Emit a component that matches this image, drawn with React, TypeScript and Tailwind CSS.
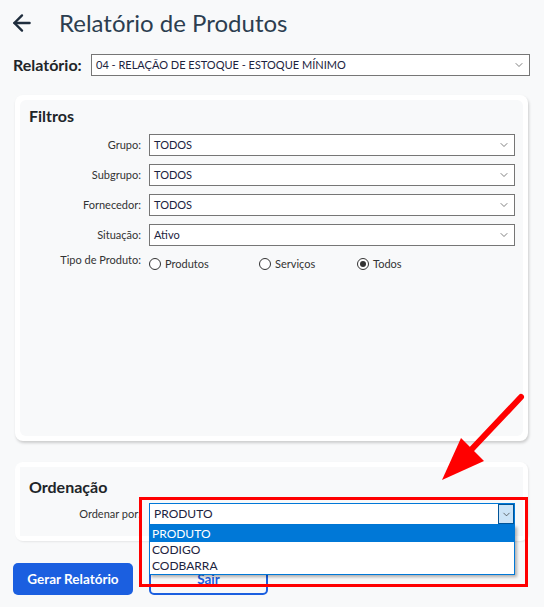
import { ArrowLeft, ChevronDown } from "lucide-react";

const filtros = [
  { label: "Grupo:", value: "TODOS" },
  { label: "Subgrupo:", value: "TODOS" },
  { label: "Fornecedor:", value: "TODOS" },
  { label: "Situação:", value: "Ativo" },
];

const tipos = [
  { label: "Produtos", checked: false, w: "w-[110px]" },
  { label: "Serviços", checked: false, w: "w-[98px]" },
  { label: "Todos", checked: true, w: "w-[60px]" },
];

function FakeSelect({ value, className = "" }: { value: string; className?: string }) {
  return (
    <div
      className={`flex items-center justify-between h-[22px] bg-white border border-[#767676] pl-[4px] pr-[4px] text-[11px] text-[#1c2340] ${className}`}
    >
      <span>{value}</span>
      <ChevronDown size={12} strokeWidth={1.5} className="text-[#555]" />
    </div>
  );
}

function Radio({ checked }: { checked: boolean }) {
  return (
    <span className="w-[12px] h-[12px] rounded-full border border-[#333] bg-white flex items-center justify-center">
      {checked && <span className="w-[6px] h-[6px] rounded-full bg-[#333]" />}
    </span>
  );
}

export default function App() {
  return (
    <div
      className="relative w-[544px] h-[607px] bg-[#f8f9fa] overflow-hidden"
      style={{ fontFamily: "Lato, 'Noto Sans', sans-serif" }}
    >
      {/* Header */}
      <div className="flex items-center h-[45px] pl-[9px]">
        <ArrowLeft size={26} strokeWidth={2.2} className="text-[#1f2d3d]" />
        <h1 className="ml-[24px] text-[24px] text-[#2c3e50] leading-none">Relatório de Produtos</h1>
      </div>

      {/* Relatório select */}
      <div className="flex items-center h-[22px] mt-[9px] pl-[13px]">
        <span className="w-[78px] text-[16px] font-bold text-[#212529]">Relatório:</span>
        <FakeSelect value="04 - RELAÇÃO DE ESTOQUE - ESTOQUE MÍNIMO" className="w-[439px] text-[10.6px]" />
      </div>

      {/* Filtros */}
      <div className="ml-[15px] mt-[19px] w-[513px] h-[346px] bg-white rounded-lg p-[5px] shadow-[1px_2px_3px_rgba(0,0,0,0.18)]">
        <div className="h-full bg-[#f8f9fa] rounded-md pl-[9px] pt-[6px]">
          <h2 className="text-[16px] font-bold text-[#212529] leading-[20px]">Filtros</h2>
          <div className="flex flex-col gap-[8px] mt-[8px]">
            {filtros.map((f) => (
              <div key={f.label} className="flex items-center">
                <span className="w-[120px] pr-[8px] text-right text-[11px] text-[#333]">{f.label}</span>
                <FakeSelect value={f.value} className="w-[366px]" />
              </div>
            ))}
            <div className="flex items-start -mt-[2px]">
              <span className="w-[120px] pr-[8px] text-right text-[11px] text-[#333]">Tipo de Produto:</span>
              <div className="flex items-center pt-[4px]">
                {tipos.map((t) => (
                  <label key={t.label} className={`flex items-center gap-[4px] text-[11px] text-[#333] ${t.w}`}>
                    <Radio checked={t.checked} />
                    <span>{t.label}</span>
                  </label>
                ))}
              </div>
            </div>
          </div>
        </div>
      </div>

      {/* Ordenação */}
      <div className="ml-[15px] mt-[21px] w-[513px] h-[79px] bg-white rounded-lg p-[5px] shadow-[1px_1px_2px_rgba(0,0,0,0.08)]">
        <div className="h-full bg-[#f8f9fa] pl-[9px] pt-[10px]">
          <h2 className="text-[16px] font-bold text-[#212529] leading-[20px]">Ordenação</h2>
          <div className="flex items-center mt-[6px]">
            <span className="w-[120px] pr-[8px] text-right text-[11px] text-[#333]">Ordenar por:</span>
            <div className="relative w-[366px] z-10">
              <div className="flex items-center justify-between h-[22px] bg-white border border-[#0078d7] pl-[4px] text-[12px] text-[#1c2340]">
                <span>PRODUTO</span>
                <span className="h-[20px] w-[16px] bg-[#cce4f7] border border-[#005499] flex items-center justify-center">
                  <ChevronDown size={11} strokeWidth={1.5} className="text-[#333]" />
                </span>
              </div>
              <ul className="absolute left-0 top-full w-full bg-white border border-[#0078d7] shadow-[2px_2px_3px_rgba(0,0,0,0.3)] text-[12px] leading-[16px] text-[#1c2340]">
                <li className="bg-[#0078d7] text-white pl-[2px]">PRODUTO</li>
                <li className="pl-[2px]">CODIGO</li>
                <li className="pl-[2px]">CODBARRA</li>
              </ul>
            </div>
          </div>
        </div>
      </div>

      {/* Buttons */}
      <div className="flex mt-[22px] pl-[13px] gap-[16px]">
        <button className="w-[120px] h-[32px] rounded-[5px] bg-[#1b5fe0] text-white text-[13.5px] font-bold">
          Gerar Relatório
        </button>
        <button className="w-[119px] h-[32px] rounded-[5px] border-2 border-[#1b5fe0] text-[#1b5fe0] text-[13.5px] font-bold">
          Sair
        </button>
      </div>

      {/* Annotation: red frame */}
      <div className="absolute left-[139px] top-[497px] w-[389px] h-[90px] border-[3px] border-[#ff0000] z-20 pointer-events-none" />

      {/* Annotation: red arrow */}
      <svg className="absolute left-0 top-0 z-20 pointer-events-none" width="544" height="607" viewBox="0 0 544 607">
        <line x1="521" y1="397" x2="470" y2="451" stroke="#ff0000" strokeWidth="6" strokeLinecap="round" />
        <polygon points="442,480 461,438 484,461" fill="#ff0000" />
      </svg>
    </div>
  );
}
